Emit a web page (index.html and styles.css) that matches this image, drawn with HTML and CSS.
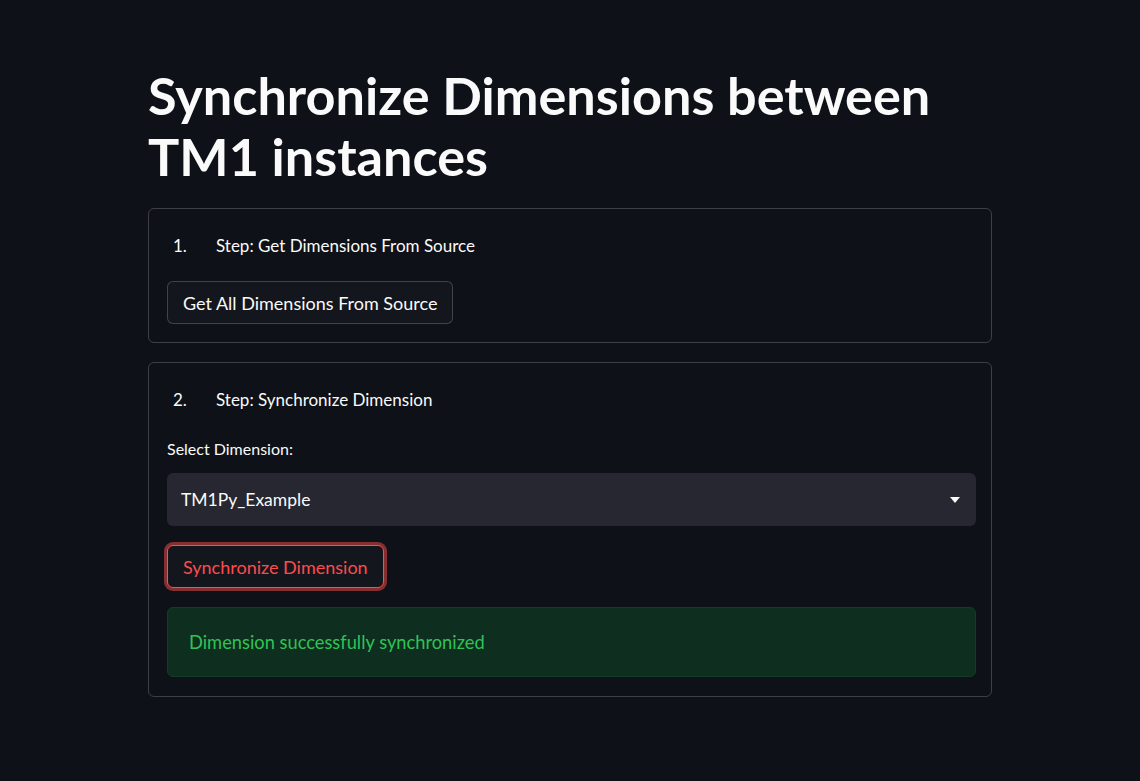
FILE: index.html
```html
<!DOCTYPE html>
<html lang="en">
<head>
<meta charset="utf-8">
<title>Synchronize Dimensions</title>
<link rel="stylesheet" href="styles.css">
</head>
<body>
<main class="page">
  <h1 class="title">Synchronize Dimensions between TM1 instances</h1>

  <section class="card">
    <ol class="step" start="1"><li>Step: Get Dimensions From Source</li></ol>
    <button class="btn btn-first" type="button">Get All Dimensions From Source</button>
  </section>

  <section class="card card-second">
    <ol class="step" start="2"><li>Step: Synchronize Dimension</li></ol>
    <label class="label">Select Dimension:</label>
    <div class="select">
      <span class="select-value">TM1Py_Example</span>
      <svg class="caret" width="10" height="6" viewBox="0 0 10 6"><path d="M0 0 L10 0 L5 6 Z" fill="#fafafa"/></svg>
    </div>
    <button class="btn btn-focus" type="button">Synchronize Dimension</button>
    <div class="success">Dimension successfully synchronized</div>
  </section>
</main>
</body>
</html>
```

FILE: styles.css
```css
html, body {
  margin: 0;
  padding: 0;
  background: #0e1117;
  color: #fafafa;
  font-family: "Lato", "Open Sans", sans-serif;
}

.page {
  width: 844px;
  margin: 0 auto;
  padding-top: 64px;
  display: flex;
  flex-direction: column;
}

.title {
  margin: 0 0 22px 0;
  font-size: 52.2px;
  line-height: 61px;
  font-weight: 700;
  letter-spacing: 0;
}

.card {
  border: 1px solid rgba(250, 250, 250, 0.2);
  border-radius: 6px;
  padding: 18px 15px 18px 18px;
  display: flex;
  flex-direction: column;
  align-items: flex-start;
}

.card-second {
  margin-top: 19px;
  padding-bottom: 19px;
}

.step {
  margin: 5px 0 0 0;
  padding-left: 6px;
  list-style: none;
  font-size: 17px;
  line-height: 28px;
}

.step[start="1"] li::before { content: "1."; }
.step[start="2"] li::before { content: "2."; }

.step li::before {
  display: inline-block;
  width: 43px;
}

.btn {
  font-family: inherit;
  font-size: 18px;
  color: #fafafa;
  background: #13161d;
  border: 1px solid rgba(250, 250, 250, 0.2);
  border-radius: 6px;
  height: 43px;
  padding: 0 15px;
  cursor: pointer;
}

.btn-first {
  margin-top: 21px;
}

.btn-focus {
  margin-top: 19px;
  color: #ff4b4b;
  border-color: #ff4b4b;
  box-shadow: 0 0 0 3px rgba(255, 75, 75, 0.5);
}

.label {
  margin-top: 24px;
  font-size: 16px;
  line-height: 22px;
}

.select {
  margin-top: 13px;
  align-self: stretch;
  height: 53px;
  background: #262730;
  border-radius: 6px;
  display: flex;
  align-items: center;
  justify-content: space-between;
  padding: 0 16px 0 14px;
  box-sizing: border-box;
}

.select-value {
  font-size: 17.5px;
}

.caret {
  display: block;
}

.success {
  margin-top: 19px;
  align-self: stretch;
  height: 70px;
  box-sizing: border-box;
  padding: 0 21px;
  display: flex;
  align-items: center;
  background: #0e2e1f;
  border: 1px solid #123d24;
  border-radius: 6px;
  color: #30c257;
  font-size: 18.3px;
}
```
